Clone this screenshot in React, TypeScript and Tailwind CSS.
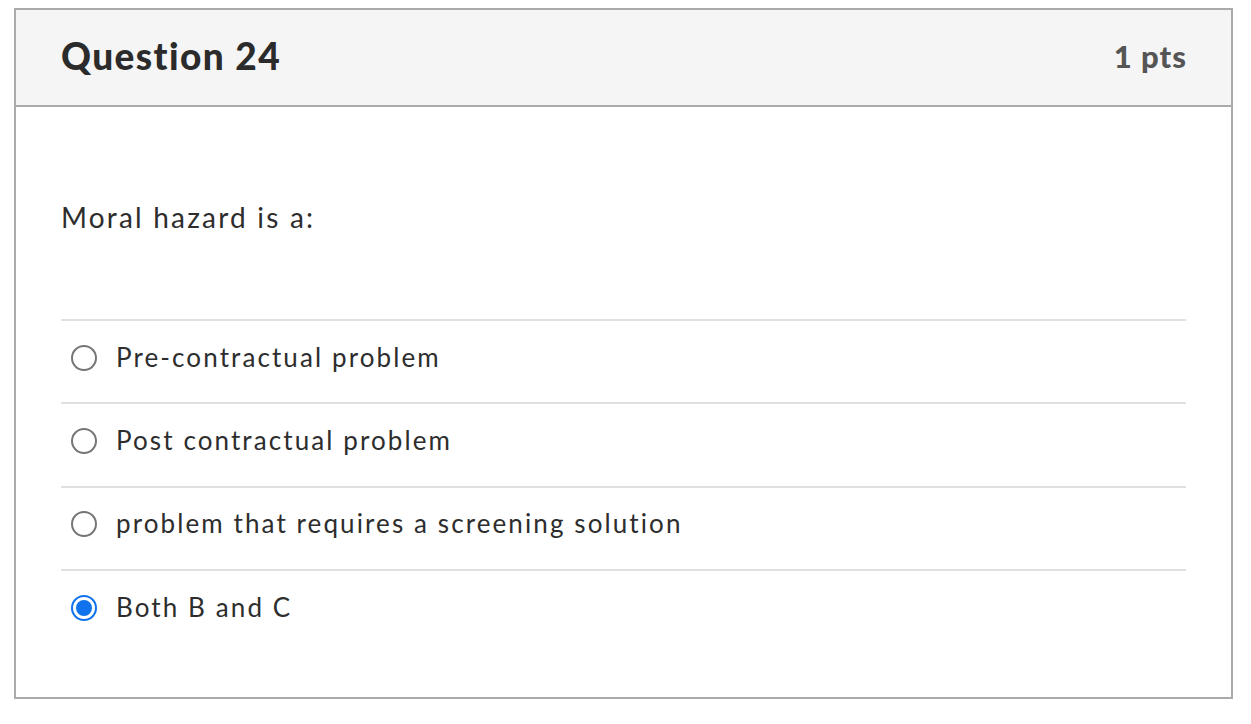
import { useState } from "react";

const OPTIONS = [
  "Pre-contractual problem",
  "Post contractual problem",
  "problem that requires a screening solution",
  "Both B and C",
];

export default function App() {
  const [picked, setPicked] = useState(3);

  return (
    <div className="min-h-screen bg-white pt-2 pl-[14px]" style={{ fontFamily: "Lato, 'Open Sans', sans-serif" }}>
      <div className="w-[1219px] h-[691px] border-2 border-[#aaaaaa] bg-white">
        {/* Header */}
        <div className="h-[97px] bg-[#f5f5f5] border-b-2 border-[#aaaaaa] flex items-center justify-between px-[45px] pb-[5px]">
          <h2 className="text-[37px] font-black text-[#2b2b2b] leading-none tracking-[1.4px]">Question 24</h2>
          <span className="text-[31px] font-black text-[#555555] leading-none tracking-[1px] -mr-[1px] mt-[2px]">1 pts</span>
        </div>

        {/* Body */}
        <div className="px-[45px]">
          <p className="pt-[96px] pb-[88px] text-[28px] text-[#2d2d2d] leading-none tracking-[2.2px]">Moral hazard is a:</p>

          <div>
            {OPTIONS.map((label, i) => (
              <label
                key={label}
                className="flex items-center h-[83.4px] pb-[10px] border-t-2 border-[#e0e0e0] cursor-pointer"
              >
                <span className="w-[46px] mr-[9px] mt-[2px] flex justify-center">
                  <span
                    className={
                      picked === i
                        ? "w-[26px] h-[26px] rounded-full border-[2.5px] border-[#1072ec] flex items-center justify-center"
                        : "w-[26px] h-[26px] rounded-full border-2 border-[#767676]"
                    }
                  >
                    {picked === i && <span className="w-[16px] h-[16px] rounded-full bg-[#1072ec]" />}
                  </span>
                </span>
                <input
                  type="radio"
                  name="q24"
                  className="sr-only"
                  checked={picked === i}
                  onChange={() => setPicked(i)}
                />
                <span className="text-[26px] text-[#2d2d2d] leading-none tracking-[2.1px]">{label}</span>
              </label>
            ))}
          </div>
        </div>
      </div>
    </div>
  );
}
